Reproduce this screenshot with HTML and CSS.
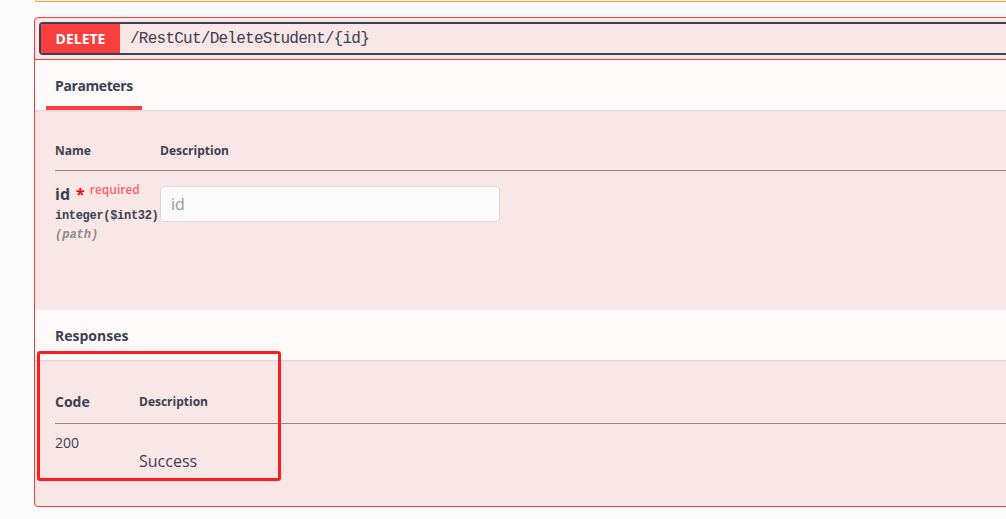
FILE: index.html
```html
<!DOCTYPE html>
<html lang="en">
<head>
<meta charset="utf-8">
<title>DELETE /RestCut/DeleteStudent/{id}</title>
<link rel="stylesheet" href="styles.css">
</head>
<body>
<div class="page">
  <div class="prev-block"></div>
  <div class="opblock">
    <div class="summary">
      <div class="summary-box">
        <span class="method">DELETE</span>
        <span class="path">/RestCut/DeleteStudent/{id}</span>
      </div>
    </div>
    <div class="section-header">
      <div class="tab-item">Parameters</div>
    </div>
    <div class="params-body">
      <table class="params-table">
        <thead>
          <tr><th class="col-name">Name</th><th>Description</th></tr>
        </thead>
        <tbody>
          <tr>
            <td class="col-name param-cell">
              <div class="param-name"><span class="pname">id</span><span class="star">*</span><span class="required">required</span></div>
              <div class="param-type">integer($int32)</div>
              <div class="param-in">(path)</div>
            </td>
            <td class="param-desc">
              <input class="param-input" type="text" placeholder="id">
            </td>
          </tr>
        </tbody>
      </table>
    </div>
    <div class="section-header resp-header">
      <div class="resp-title">Responses</div>
    </div>
    <div class="resp-body">
      <table class="resp-table">
        <thead>
          <tr><th class="col-code">Code</th><th class="col-desc">Description</th></tr>
        </thead>
        <tbody>
          <tr>
            <td class="col-code code-cell">200</td>
            <td class="desc-cell">Success</td>
          </tr>
        </tbody>
      </table>
    </div>
  </div>
  <div class="annotation"></div>
</div>
</body>
</html>
```
FILE: styles.css
```css
html, body {
  margin: 0;
  padding: 0;
}
body {
  background: #fafafa;
  overflow: hidden;
  font-family: "Open Sans", "Noto Sans", sans-serif;
  color: #3b4151;
}
.page {
  position: relative;
  width: 1006px;
  height: 519px;
}
.prev-block {
  height: 1px;
  margin-left: 35px;
  margin-right: -40px;
  border-left: 1px solid #f5a040;
  border-bottom: 1px solid #f5a040;
  border-bottom-left-radius: 4px;
  background: rgba(252, 161, 48, 0.06);
}
.opblock {
  margin: 15px -40px 0 34px;
  border: 1px solid #f93e3e;
  border-radius: 4px;
  background: rgba(249, 62, 62, 0.1);
}
.summary {
  padding: 4px;
  border-bottom: 1px solid #f93e3e;
}
.summary-box {
  display: flex;
  align-items: center;
  height: 29px;
  border: 2px solid #3b4151;
  border-radius: 4px;
  overflow: hidden;
}
.method {
  width: 79px;
  height: 29px;
  line-height: 29px;
  background: #f93e3e;
  color: #fff;
  font-weight: 700;
  font-size: 14px;
  text-align: center;
  flex: none;
}
.path {
  margin-left: 10px;
  font-family: "Liberation Mono", "DejaVu Sans Mono", monospace;
  font-size: 16px;
  letter-spacing: -0.75px;
  font-weight: 400;
  color: #3b4151;
}
.section-header {
  height: 50px;
  box-sizing: border-box;
  background: rgba(255, 255, 255, 0.8);
  box-shadow: 0 1px 2px rgba(0, 0, 0, 0.1);
  padding-left: 11px;
  display: flex;
}
.tab-item {
  padding: 16px 9px 10px 9px;
  line-height: 20px;
  font-size: 14px;
  font-weight: 700;
  letter-spacing: -0.4px;
  border-bottom: 4px solid #f93e3e;
}
.params-body {
  height: 200px;
  box-sizing: border-box;
  padding: 19px 0 0 20px;
}
table {
  border-collapse: collapse;
  width: 100%;
}
.params-table th {
  text-align: left;
  font-size: 12px;
  font-weight: 700;
  padding: 13px 0 11px 0;
  line-height: 17px;
  border-bottom: 1px solid rgba(59, 65, 81, 0.35);
}
.col-name {
  width: 105px;
}
.param-cell {
  vertical-align: top;
  padding: 9px 0 0 0;
}
.param-name {
  line-height: 20px;
  white-space: nowrap;
}
.pname {
  font-size: 16px;
  font-weight: 700;
}
.star {
  color: #ff0000;
  font-size: 16px;
  font-weight: 700;
  margin-left: 6px;
}
.required {
  color: rgba(255, 0, 0, 0.6);
  font-size: 12px;
  font-weight: 600;
  vertical-align: 6px;
  margin-left: 5px;
}
.param-type {
  margin-top: 4px;
  font-family: "Liberation Mono", "DejaVu Sans Mono", monospace;
  font-size: 12px;
  letter-spacing: -0.3px;
  font-weight: 700;
  line-height: 16px;
  white-space: nowrap;
}
.param-in {
  margin-top: 3px;
  font-family: "Liberation Mono", "DejaVu Sans Mono", monospace;
  font-size: 12px;
  font-style: italic;
  font-weight: 700;
  color: #8b8b8b;
  line-height: 16px;
}
.param-desc {
  vertical-align: top;
  padding: 15px 0 0 0;
}
.param-input {
  display: block;
  width: 340px;
  height: 36px;
  box-sizing: border-box;
  margin: 0;
  padding: 0 10px;
  border: 1px solid #d9d9d9;
  border-radius: 4px;
  background: #fafafa;
  font-family: "Open Sans", "Noto Sans", sans-serif;
  font-size: 16px;
  color: #3b4151;
}
.param-input::placeholder {
  color: #9a9a9a;
}
.resp-header {
  padding-left: 20px;
  align-items: center;
}
.resp-title {
  font-size: 14px;
  font-weight: 700;
  line-height: 20px;
  margin-top: 2px;
}
.resp-body {
  height: 146px;
  box-sizing: border-box;
  padding: 20px 0 0 20px;
}
.resp-table th {
  text-align: left;
  padding: 12px 0;
  line-height: 19px;
  font-weight: 700;
  border-bottom: 1px solid rgba(59, 65, 81, 0.35);
}
.col-code {
  width: 84px;
  font-size: 14px;
}
.col-desc {
  font-size: 12px;
}
.code-cell {
  vertical-align: top;
  padding: 9px 0 0 0;
  line-height: 20px;
}
.desc-cell {
  vertical-align: top;
  padding: 25px 0 0 0;
  font-size: 16px;
  line-height: 24px;
}
.annotation {
  position: absolute;
  left: 37px;
  top: 351px;
  width: 238px;
  height: 124px;
  border: 3px solid #fe1d1d;
  border-radius: 3px;
}
```
